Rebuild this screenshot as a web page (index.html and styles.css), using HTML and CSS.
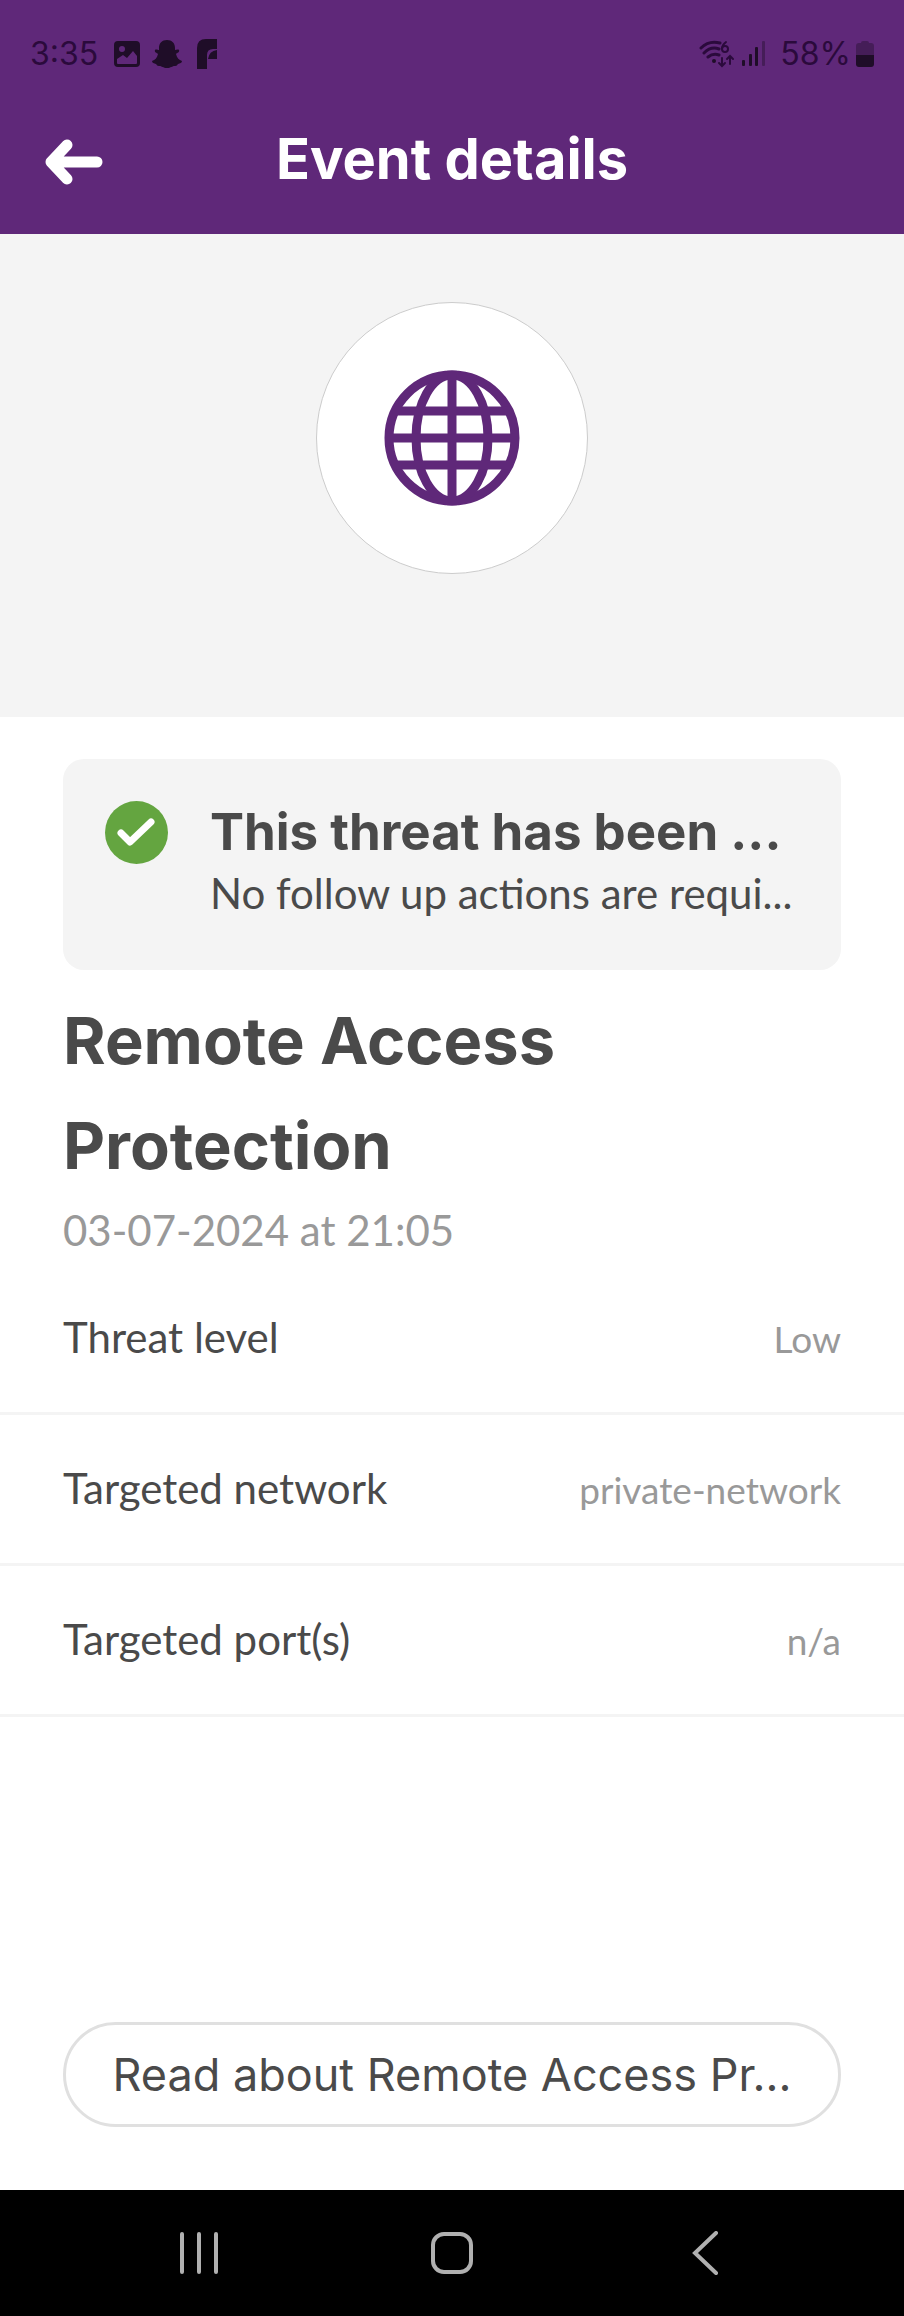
FILE: index.html
```
<!DOCTYPE html>
<html lang="en">

<head>
    <meta charset="utf-8">
    <meta name="viewport" content="width=device-width, initial-scale=1">
    <title>Event details</title>
    <link rel="stylesheet" href="styles.css">
</head>

<body>
    <header class="header">
        <div class="status-bar">
            <div class="status-group">
                <span class="status-text">3:35</span>
                <svg class="icon-image" width="26" height="26" viewBox="0 0 26 26">
                    <path fill-rule="evenodd" d="M4 0h18a4 4 0 0 1 4 4v18a4 4 0 0 1-4 4H4a4 4 0 0 1-4-4V4a4 4 0 0 1 4-4zM8 5a3 3 0 1 0 0 6 3 3 0 0 0 0-6zM3 18v4q0 1 1 1h18q1 0 1-1v-7l-4-5-6 7-4-3z" />
                </svg>
                <svg width="30" height="30" viewBox="0 0 30 30">
                    <path d="M15 1c5 0 8 3 8 8v2c1 0 3-1 4 0 1 2-2 3-3 4 1 4 3 6 6 7 0 2-2 2-4 3-1 1-1 2-3 2-3 0-4 2-8 2s-5-2-8-2c-2 0-2-1-3-2-2-1-4-1-4-3 3-1 5-3 6-7-1-1-4-2-3-4 1-1 3 0 4 0V9c0-5 3-8 8-8z" />
                </svg>
                <svg class="icon-flip" width="20" height="30" viewBox="0 0 20 30">
                    <path d="M0 30V9Q0 0 9 0h11v10h-4q-6 0-6 6v14z" />
                    <path d="M20 11v9h-9q1-8 9-9z" />
                </svg>
            </div>
            <div class="status-group">
                <svg width="36" height="28" viewBox="0 0 36 28">
                    <g fill="none" stroke="currentColor" stroke-width="3" stroke-linecap="round">
                        <path d="M2 8Q10 0 21 3M5 13Q12 6 20 9M9 17q5-4 11-2" />
                        <path d="M27 2q-4 3-4 7" stroke-width="2" />
                        <circle cx="26" cy="9" r="3" stroke-width="2" />
                        <path d="M23 18v7m-3-2 3 3 3-3M31 24v-8m-3 3 3-3 3 3" stroke-width="2" />
                    </g>
                    <circle cx="15" cy="21" r="2" />
                </svg>
                <svg class="icon-signal" width="24" height="26" viewBox="0 0 24 26">
                    <rect x="0" y="19" width="3" height="6" rx="1" />
                    <rect x="7" y="13" width="3" height="12" rx="1" />
                    <rect x="13" y="6" width="3" height="19" rx="1" />
                    <rect x="20" y="0" width="3" height="25" rx="1" opacity=".4" />
                </svg>
                <span class="status-text battery-text">58%</span>
                <svg width="18" height="27" viewBox="0 0 18 27">
                    <path d="M5 2q0-2 2-2h4q2 0 2 2h2q3 0 3 3v9H0V5q0-3 3-3z" opacity=".4" />
                    <path d="M0 14h18v9q0 3-3 3H3q-3 0-3-3z" />
                </svg>
            </div>
        </div>
        <div class="title-bar">
            <button type="button" class="back-btn" aria-label="Back">
                <svg width="58" height="46" viewBox="0 0 58 46">
                    <path d="M22 6 6 23l16 17M6 23h46" fill="none" stroke="#fff" stroke-width="11" stroke-linecap="round" stroke-linejoin="round" />
                </svg>
            </button>
            <h1>Event details</h1>
        </div>
    </header>

    <main>
        <div class="hero">
            <div class="hero-circle">
                <svg width="136" height="136" viewBox="0 0 136 136" fill="none" stroke="#5f2879" stroke-width="9">
                    <circle cx="68" cy="68" r="63" />
                    <ellipse cx="68" cy="68" rx="36" ry="63" />
                    <path d="M68 5v126M5 68h126M12 41h112M12 95h112" />
                </svg>
            </div>
        </div>

        <div class="content">
            <div class="notice">
                <svg class="notice-icon" width="63" height="63" viewBox="0 0 63 63">
                    <circle cx="31.5" cy="31.5" r="31.5" fill="#64a540" />
                    <path d="M16 32l9 9 21-20" fill="none" stroke="#fff" stroke-width="7" stroke-linecap="round" stroke-linejoin="round" />
                </svg>
                <div class="notice-text">
                    <h2>This threat has been ...</h2>
                    <p>No follow up actions are requi...</p>
                </div>
            </div>
            <h2 class="event-name">Remote Access Protection</h2>
            <p class="event-date">03-07-2024 at 21:05</p>
        </div>

        <dl class="details">
            <div class="row">
                <dt>Threat level</dt>
                <dd>Low</dd>
            </div>
            <div class="row">
                <dt>Targeted network</dt>
                <dd>private-network</dd>
            </div>
            <div class="row">
                <dt>Targeted port(s)</dt>
                <dd>n/a</dd>
            </div>
        </dl>

        <div class="actions">
            <button type="button" class="read-btn">Read about Remote Access Pr...</button>
        </div>
    </main>

    <nav class="nav-bar">
        <button type="button" aria-label="Recent apps">
            <svg width="44" height="44" viewBox="0 0 44 44">
                <path d="M5 3v38M22 3v38M39 3v38" />
            </svg>
        </button>
        <button type="button" aria-label="Home">
            <svg width="44" height="44" viewBox="0 0 44 44">
                <rect x="3" y="3" width="38" height="38" rx="11" />
            </svg>
        </button>
        <button type="button" aria-label="Back">
            <svg width="44" height="44" viewBox="0 0 44 44">
                <path d="M33 2 12 22l21 20" />
            </svg>
        </button>
    </nav>
</body>

</html>
```
FILE: styles.css
```
* {
    box-sizing: border-box;
}

body {
    display: flex;
    flex-direction: column;
    min-height: 100vh;
    margin: 0;
    background: #fff;
    color: #4a4a4a;
    font-family: Lato, "Open Sans", sans-serif;
    font-size: 42px;
}

h1,
h2,
p,
dl,
dd {
    margin: 0;
}

svg {
    display: block;
    flex: none;
}

button {
    border: none;
    background: none;
    padding: 0;
    cursor: pointer;
}

.header {
    background: #5f2879;
}

.status-bar {
    display: flex;
    justify-content: space-between;
    padding: 34px 30px 0;
    color: #2b0a3c;
}

.status-group {
    display: flex;
    align-items: center;
    height: 40px;
}

.status-group svg {
    fill: #1f0d28;
}

.status-text {
    font-family: Inter, sans-serif;
    font-size: 32px;
    line-height: 40px;
}

.icon-image {
    margin: 0 12px 0 16px;
}

.icon-flip {
    margin-left: 15px;
}

.icon-signal {
    margin: 0 14px 0 7px;
}

.battery-text {
    margin-right: 5px;
}

.title-bar {
    display: grid;
    grid-template-columns: 58px 1fr 58px;
    align-items: center;
    height: 160px;
    padding: 10px 45px 0;
}

.back-btn {
    padding-top: 6px;
}

.title-bar h1 {
    color: #fff;
    font-family: Inter, sans-serif;
    font-size: 56px;
    font-weight: 700;
    line-height: 64px;
    text-align: center;
    white-space: nowrap;
}

main {
    display: flex;
    flex: 1;
    flex-direction: column;
}

.hero {
    display: flex;
    justify-content: center;
    padding: 68px 0 143px;
    background: #f4f4f4;
}

.hero-circle {
    display: flex;
    align-items: center;
    justify-content: center;
    width: 272px;
    height: 272px;
    border: 1px solid #ccc;
    border-radius: 50%;
    background: #fff;
}

.content {
    padding: 42px 63px 2px;
}

.notice {
    display: flex;
    gap: 42px;
    padding: 42px 42px 46px;
    border-radius: 21px;
    background: #f4f4f4;
}

.notice-text {
    min-width: 0;
    white-space: nowrap;
}

.notice h2 {
    font-family: Inter, sans-serif;
    font-size: 51px;
    font-weight: 700;
    line-height: 61px;
}

.notice p {
    line-height: 62px;
}

.event-name {
    max-width: 600px;
    margin-top: 18px;
    font-family: Inter, sans-serif;
    font-size: 65px;
    font-weight: 700;
    line-height: 105px;
}

.event-date {
    color: #999;
    line-height: 64px;
}

.row {
    display: flex;
    align-items: baseline;
    justify-content: space-between;
    padding: 42px 63px;
    border-bottom: 3px solid #f4f4f4;
    line-height: 62px;
}

.row dd {
    color: #999;
    font-size: 37px;
}

.actions {
    margin-top: auto;
    padding: 63px;
}

.read-btn {
    width: 100%;
    height: 105px;
    border: 3px solid #e0e0e0;
    border-radius: 53px;
    color: #4a4a4a;
    font-family: Inter, sans-serif;
    font-size: 45px;
    white-space: nowrap;
}

.nav-bar {
    display: grid;
    grid-template-columns: repeat(3, 1fr);
    height: 126px;
    padding: 0 8%;
    background: #000;
}

.nav-bar button {
    display: flex;
    align-items: center;
    justify-content: center;
}

.nav-bar svg {
    fill: none;
    stroke: #b0b0b0;
    stroke-width: 4;
    stroke-linecap: round;
}
```
